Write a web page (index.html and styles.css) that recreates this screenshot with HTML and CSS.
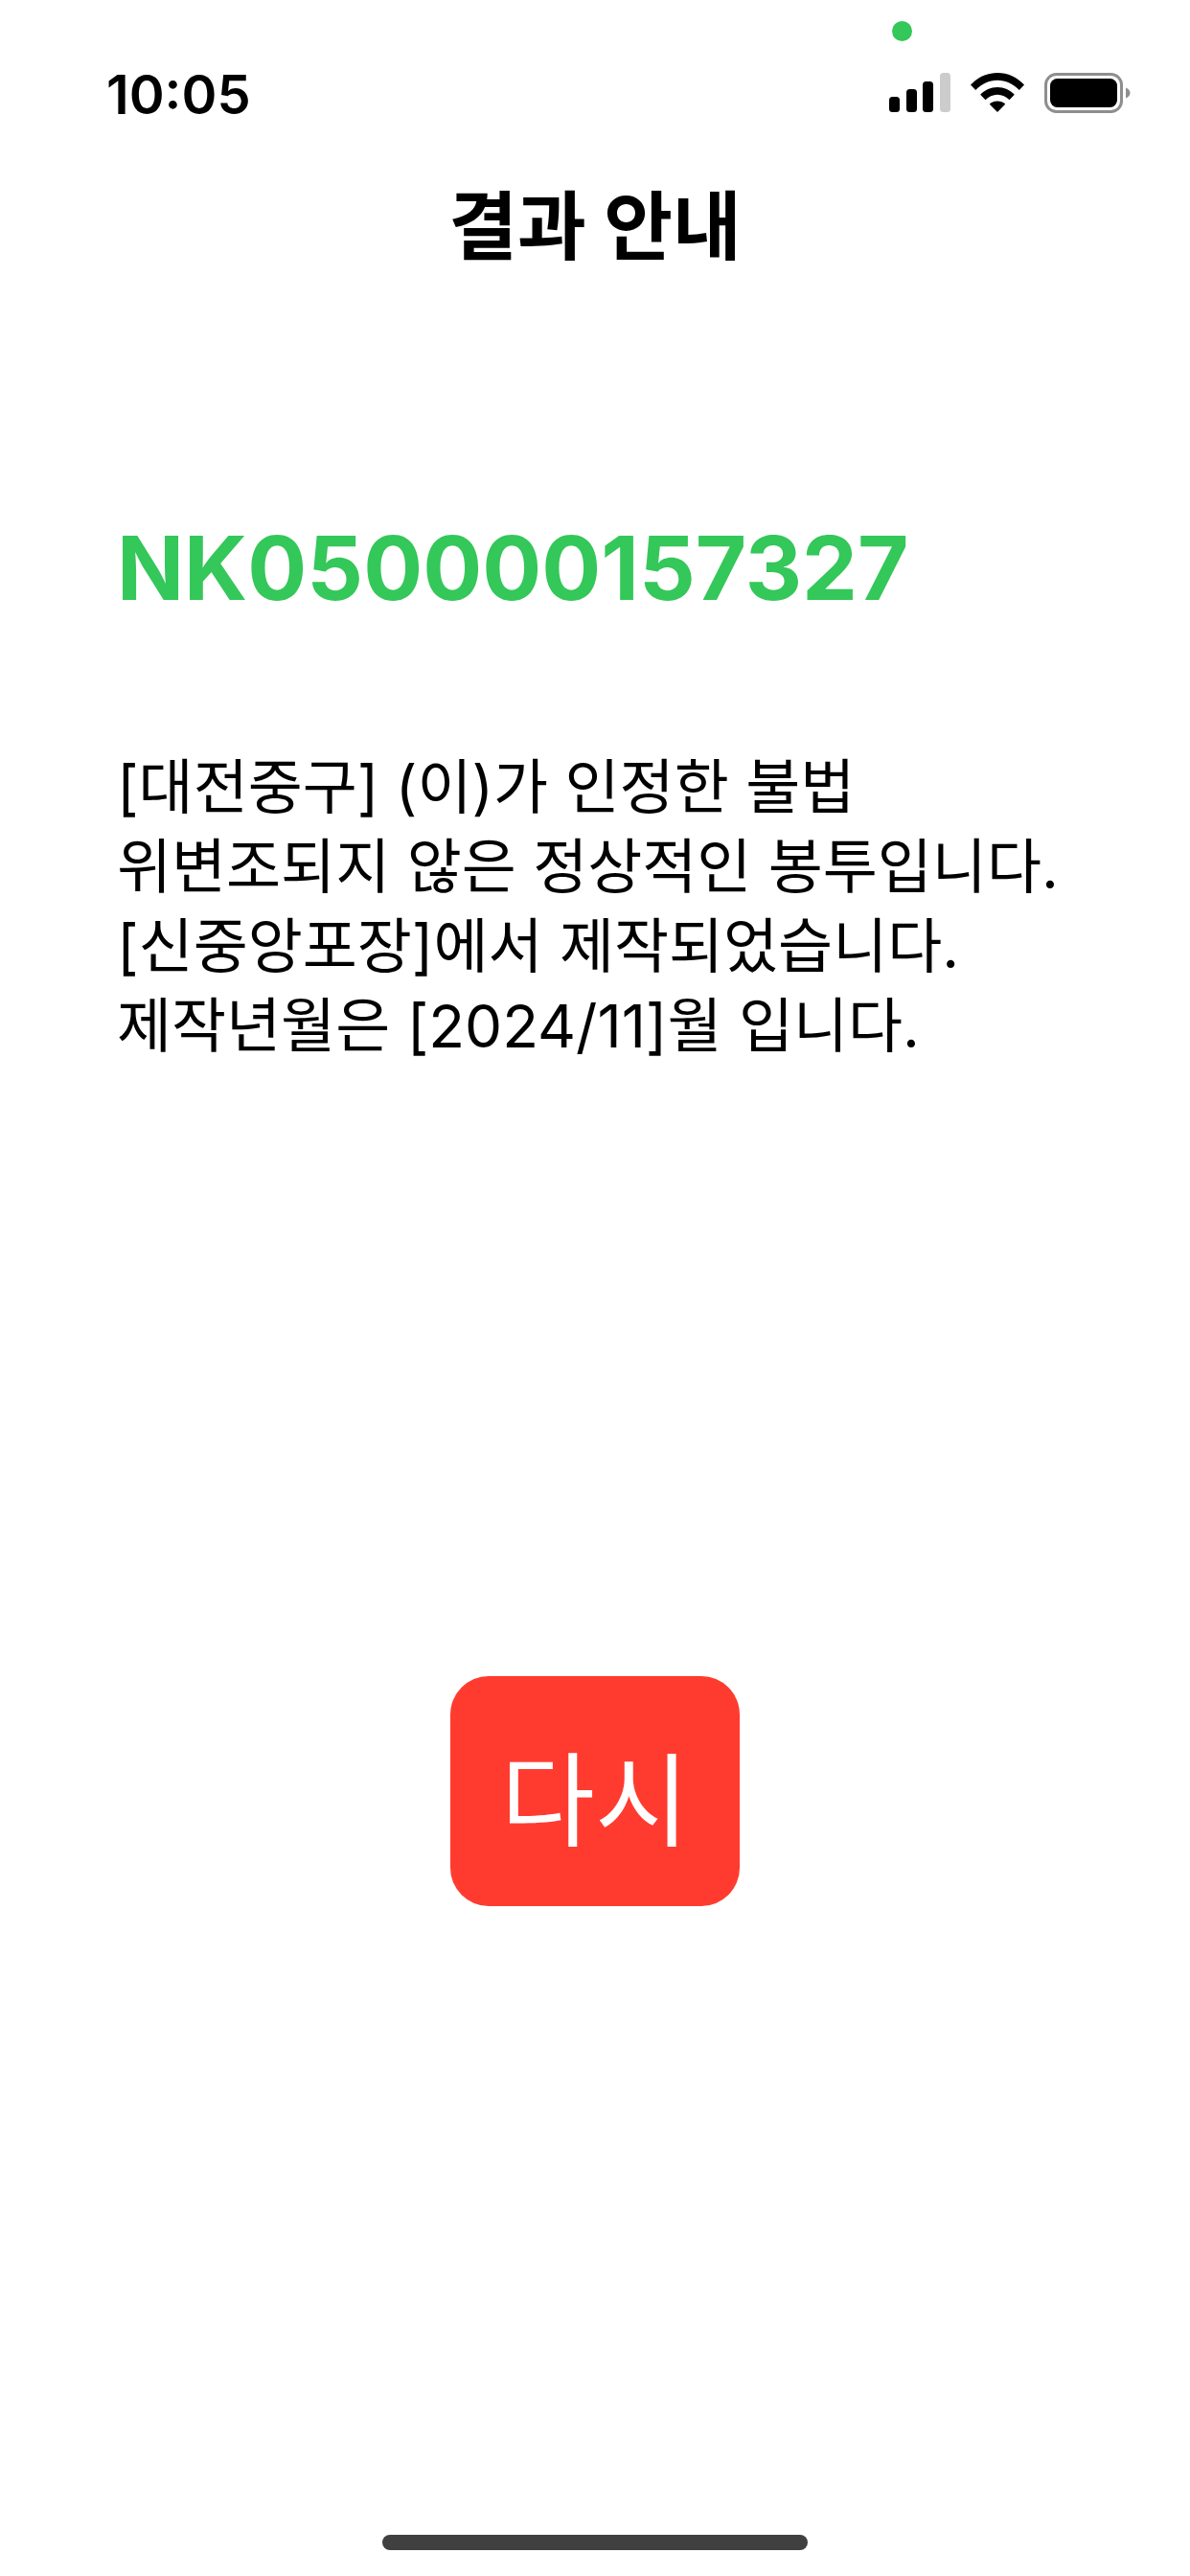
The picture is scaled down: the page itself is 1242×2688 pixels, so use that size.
FILE: index.html
```html
<!DOCTYPE html>
<html lang="ko">
<head>
    <meta charset="utf-8">
    <title>결과 안내</title>
    <link rel="stylesheet" href="styles.css">
</head>
<body>
    <div class="screen">
        <div class="status-bar">
            <span class="status-time">10:05</span>
            <span class="privacy-dot"></span>
            <div class="status-icons">
                <svg class="icon-signal" width="64" height="41" viewBox="0 0 64 41">
                    <rect x="0" y="25" width="11" height="16" rx="3.5" fill="#000"/>
                    <rect x="18" y="17" width="11" height="24" rx="3.5" fill="#000"/>
                    <rect x="35" y="9" width="11" height="32" rx="3.5" fill="#000"/>
                    <rect x="53" y="0" width="11" height="41" rx="3.5" fill="#ccc"/>
                </svg>
                <svg class="icon-wifi" width="56" height="41" viewBox="0 0 56 41">
                    <path d="M0 12.5C7.5 4.5 17.2 0 28 0s20.500 4.500 28 12.500l-5.200 5.400C44.600 11.500 36.700 7.700 28 7.700S11.400 11.500 5.200 17.900z" fill="#000"/>
                    <path d="M10.200 22.800C14.800 17.800 21 15 28 15s13.200 2.800 17.800 7.800l-5.300 5.400C37.200 24.800 32.800 22.700 28 22.700s-9.200 2.100-12.500 5.500z" fill="#000"/>
                    <path d="M19.800 32.700C22 30.600 24.800 29.500 28 29.500s6 1.100 8.200 3.200L28 41z" fill="#000"/>
                </svg>
                <svg class="icon-battery" width="90" height="42" viewBox="0 0 90 42">
                    <rect x="1.500" y="1.500" width="79" height="39" rx="11" fill="none" stroke="#8e8e8e" stroke-width="3"/>
                    <rect x="6" y="6" width="70" height="30" rx="7.500" fill="#000"/>
                    <path d="M85 15.500c2.800 1 4.500 3 4.500 5.500s-1.700 4.500-4.500 5.500z" fill="#8e8e8e"/>
                </svg>
            </div>
        </div>

        <h1 class="title">결과 안내</h1>

        <div class="result">
            <div class="code">NK050000157327</div>
            <p class="message">[대전중구] (이)가 인정한 불법<br>위변조되지 않은 정상적인 봉투입니다.<br>[신중앙포장]에서 제작되었습니다.<br>제작년월은 [2024/11]월 입니다.</p>
        </div>

        <div class="actions">
            <button class="retry-btn">다시</button>
        </div>

        <div class="home-indicator"></div>
    </div>
</body>
</html>
```

FILE: styles.css
```css
body {
    margin: 0;
    background-color: #fff;
    color: #000;
    font-family: Inter, "Noto Sans CJK KR", sans-serif;
}

.screen {
    height: 2688px;
    display: flex;
    flex-direction: column;
    overflow: hidden;
}

.status-bar {
    position: relative;
    height: 162px;
    box-sizing: border-box;
    padding: 0 62px 0 111px;
    display: flex;
    align-items: flex-start;
    justify-content: space-between;
}

.status-time {
    margin-top: 67px;
    font-size: 56px;
    line-height: 64px;
    font-weight: 600;
}

.privacy-dot {
    position: absolute;
    left: 931px;
    top: 22px;
    width: 21px;
    height: 21px;
    border-radius: 50%;
    background-color: #34c759;
}

.status-icons {
    margin-top: 76px;
    display: flex;
    align-items: flex-start;
    gap: 21px;
}

.status-icons svg {
    display: block;
}

.title {
    margin: 0;
    height: 150px;
    font-size: 78px;
    line-height: 150px;
    font-weight: 700;
    text-align: center;
}

.result {
    padding: 0 100px 0 122px;
}

.code {
    margin-top: 226px;
    font-size: 92px;
    line-height: 110px;
    font-weight: 700;
    color: #34c759;
}

.message {
    margin: 132px 0 0;
    font-size: 62px;
    line-height: 83px;
    font-weight: 400;
    white-space: nowrap;
}

.actions {
    margin-top: 637px;
    display: flex;
    justify-content: center;
}

.retry-btn {
    width: 302px;
    height: 240px;
    border: none;
    border-radius: 40px;
    background-color: #ff3b30;
    color: #fff;
    font-family: inherit;
    font-size: 107px;
    font-weight: 400;
    padding: 4px 0 0;
}

.home-indicator {
    width: 444px;
    height: 16px;
    margin: auto auto 27px;
    border-radius: 8px;
    background-color: #404040;
}
```
